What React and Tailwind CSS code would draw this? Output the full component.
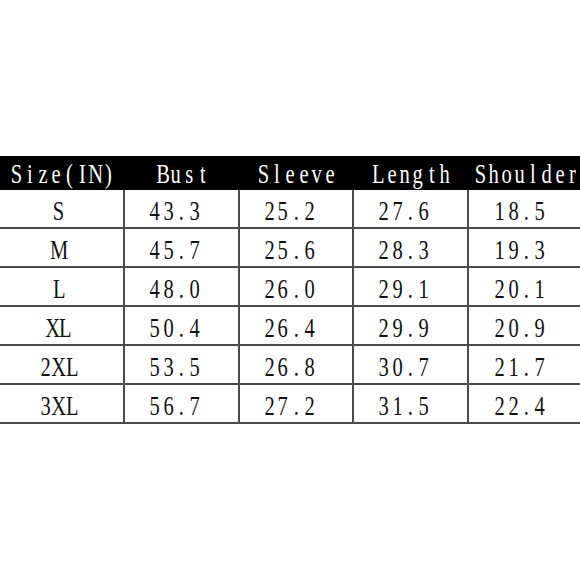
const headers = ['Size(IN)', 'Bust', 'Sleeve', 'Length', 'Shoulder'];

const rows = [
  ['S', '43.3', '25.2', '27.6', '18.5'],
  ['M', '45.7', '25.6', '28.3', '19.3'],
  ['L', '48.0', '26.0', '29.1', '20.1'],
  ['XL', '50.4', '26.4', '29.9', '20.9'],
  ['2XL', '53.5', '26.8', '30.7', '21.7'],
  ['3XL', '56.7', '27.2', '31.5', '22.4'],
];

const cols = 'grid grid-cols-[125px_115px_114px_115px_115px]';

// half-width, monospaced glyph cells like the original SimSun rendering
const Text = ({ children }) => (
  <span className="inline-flex whitespace-pre">
    {children.split('').map((ch, i) => (
      <span key={i} className="inline-flex w-[13.25px] justify-center">
        <span className="inline-block scale-x-[0.76]">{ch}</span>
      </span>
    ))}
  </span>
);

const App = () => {
  return (
    <div
      className="w-[580px] h-[580px] overflow-hidden bg-white text-[27px] leading-none text-[#111]"
      style={{ fontFamily: '"Liberation Serif", "Times New Roman", serif' }}
    >
      <div className="w-[584px] pt-[156px]">
        {/* Header */}
        <div className={`${cols} h-[34px] bg-black text-white`}>
          {headers.map((h) => (
            <div key={h} className="flex items-center justify-center pt-[2px]">
              <Text>{h}</Text>
            </div>
          ))}
        </div>

        {/* Body */}
        {rows.map((row) => (
          <div key={row[0]} className={cols}>
            {row.map((cell, i) => (
              <div
                key={i}
                className={`flex h-[39px] items-center justify-center border-b-2 border-[#4a4a4a] pt-[6px] ${
                  i < 4 ? 'border-r-2' : ''
                } ${i > 0 ? 'pr-[13px]' : 'pr-[5px]'}`}
              >
                <Text>{cell}</Text>
              </div>
            ))}
          </div>
        ))}
      </div>
    </div>
  );
};

export default App;
